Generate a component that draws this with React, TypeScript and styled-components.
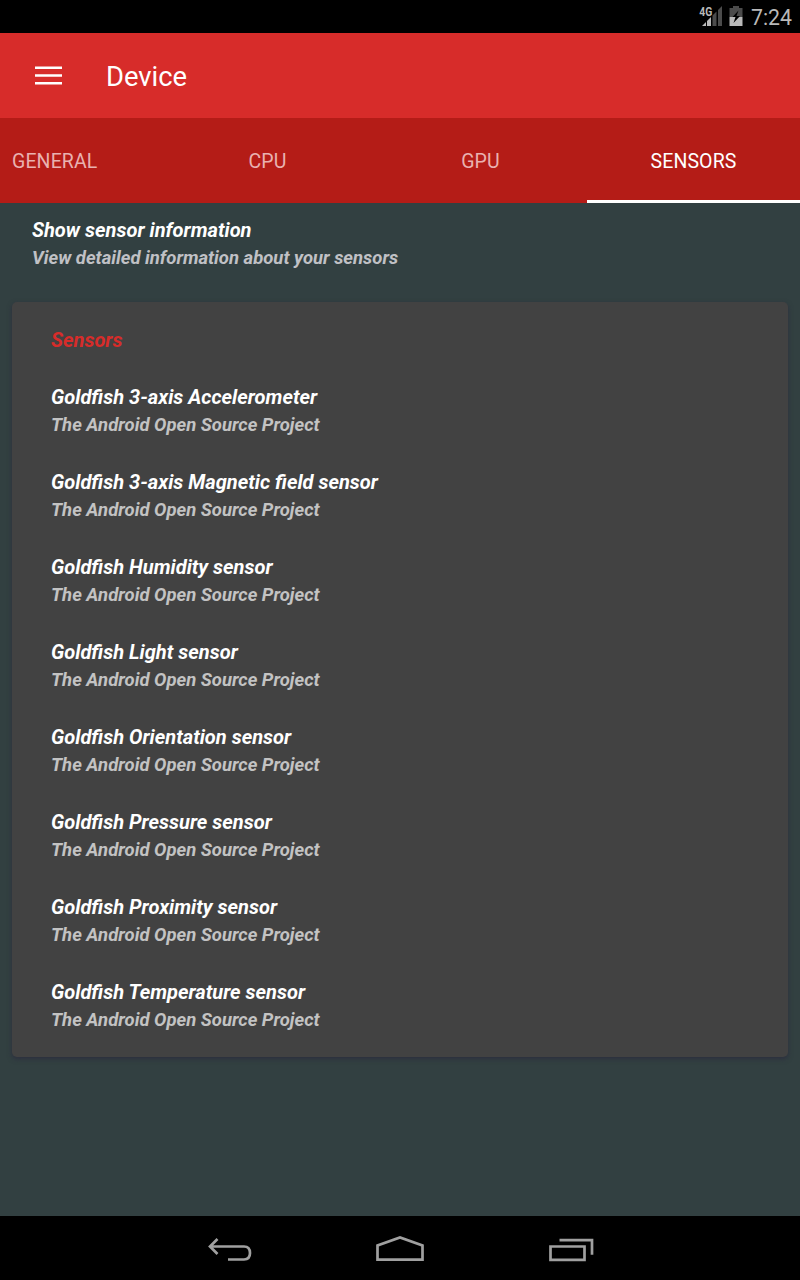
import React from "react";
import styled, { createGlobalStyle } from "styled-components";

const GlobalStyle = createGlobalStyle`
  * { box-sizing: border-box; }
  body { margin: 0; background: #324041; font-family: Roboto, "Liberation Sans", sans-serif; }
`;

const Screen = styled.div`
  display: flex;
  flex-direction: column;
  width: 800px;
  height: 1280px;
  background: #324041;
  overflow: hidden;
`;

const StatusBar = styled.header`
  display: flex;
  justify-content: flex-end;
  align-items: center;
  height: 33px;
  padding-right: 8px;
  background: #000;
`;

const StatusIcons = styled.svg`
  display: block;
  margin-right: 7px;
`;

const Clock = styled.span`
  color: #b9b9b9;
  font-size: 21.3px;
  line-height: 25px;
  padding-top: 2px;
`;

const AppBar = styled.div`
  display: flex;
  align-items: center;
  height: 85px;
  padding-left: 32px;
  background: #d72c2a;
`;

const MenuIcon = styled.svg`
  display: block;
`;

const Title = styled.h1`
  margin: 3px 0 0 42px;
  color: #fff;
  font-size: 27.4px;
  font-weight: 400;
  line-height: 32px;
`;

const Tabs = styled.nav`
  display: flex;
  height: 85px;
  background: #b41c17;
`;

const Tab = styled.div<{ $width: number; $active?: boolean; $start?: boolean }>`
  display: flex;
  align-items: center;
  justify-content: ${(p) => (p.$start ? "flex-start" : "center")};
  width: ${(p) => p.$width}px;
  padding: ${(p) => (p.$start ? "5px 0 0 12px" : "5px 0 0")};
  border-bottom: 3px solid ${(p) => (p.$active ? "#fff" : "transparent")};
  color: ${(p) => (p.$active ? "#fff" : "#e9b1b0")};
  font-size: 19.5px;
  letter-spacing: 0.12px;
  line-height: 22px;
`;

const Content = styled.main`
  flex: 1;
  padding: 14px 12px 0;
`;

const Intro = styled.section`
  height: 85px;
  padding-left: 20px;
`;

const Primary = styled.div`
  color: #fff;
  font-size: 20.6px;
  font-style: italic;
  font-weight: 700;
  line-height: 26px;
  transform: scaleX(0.974);
  transform-origin: left;
`;

const Secondary = styled.div<{ $onCard?: boolean }>`
  margin-top: 3px;
  color: ${(p) => (p.$onCard ? "#c3c3c3" : "#c0c1c5")};
  font-size: 19.2px;
  font-style: italic;
  font-weight: 700;
  line-height: 24px;
  transform: scaleX(0.963);
  transform-origin: left;
`;

const Card = styled.section`
  height: 755px;
  padding: 25px 39px 0;
  border-radius: 5px;
  background: #424242;
  box-shadow: 0 2px 5px rgba(44, 44, 62, 0.9);
`;

const CardTitle = styled(Primary).attrs({ as: "h2" })`
  margin: 0 0 31px;
  color: #d72c2a;
`;

const SensorRow = styled.div`
  height: 85px;
`;

const NavBar = styled.footer`
  display: flex;
  justify-content: center;
  height: 64px;
  background: #000;
`;

const NavIcons = styled.svg`
  display: block;
`;

const sensors = [
  "3-axis Accelerometer",
  "3-axis Magnetic field sensor",
  "Humidity sensor",
  "Light sensor",
  "Orientation sensor",
  "Pressure sensor",
  "Proximity sensor",
  "Temperature sensor",
];

export default function App() {
  return (
    <Screen>
      <GlobalStyle />
      <StatusBar>
        <StatusIcons width="46" height="33" viewBox="698 0 46 33">
          <path d="M718 10l4-4v20h-4zM712.500 15.500l4-4V26h-4z" fill="#4b4b4b" />
          <path d="M707 21l4-4v9h-4zM702 26l4-4v4z" fill="#b9b9b9" />
          <text x="699.200" y="15.500" fill="#b9b9b9" fontSize="12.800" fontWeight="700" textLength="13" lengthAdjust="spacingAndGlyphs">4G</text>
          <path d="M733 6h6v2h3.500v9h-13V8H733z" fill="#4b4b4b" />
          <path d="M729.500 17h13v9h-13z" fill="#b9b9b9" />
          <path d="M738.500 10.500l-6 6.500h3l-2 6 6.500-7h-3.500z" fill="#000" />
        </StatusIcons>
        <Clock>7:24</Clock>
      </StatusBar>
      <AppBar>
        <MenuIcon width="32" height="32" viewBox="0 0 32 32">
          <path d="M3 7.750h27M3 15.500h27M3 23.250h27" stroke="#fff" strokeWidth="2.700" />
        </MenuIcon>
        <Title>Device</Title>
      </AppBar>
      <Tabs>
        <Tab $width={161} $start>GENERAL</Tab>
        <Tab $width={213}>CPU</Tab>
        <Tab $width={213}>GPU</Tab>
        <Tab $width={213} $active>SENSORS</Tab>
      </Tabs>
      <Content>
        <Intro>
          <Primary>Show sensor information</Primary>
          <Secondary>View detailed information about your sensors</Secondary>
        </Intro>
        <Card>
          <CardTitle>Sensors</CardTitle>
          {sensors.map((name) => (
            <SensorRow key={name}>
              <Primary>Goldfish {name}</Primary>
              <Secondary $onCard>The Android Open Source Project</Secondary>
            </SensorRow>
          ))}
        </Card>
      </Content>
      <NavBar>
        <NavIcons width="400" height="64" viewBox="200 1216 400 64" fill="none" stroke="#a0a0a0" strokeWidth="2.700">
          <path d="M217.500 1239l-7.500 7.500 7.500 7.500M210 1246.500h34q6 0 6 6.500t-6 6.500h-16" />
          <path d="M377.500 1259.700v-14.200l22.500-8 22.500 8v14.200z" />
          <path d="M550.500 1246.500h34v13.300h-34zM559.500 1240.200h32.500v14.500" />
        </NavIcons>
      </NavBar>
    </Screen>
  );
}
